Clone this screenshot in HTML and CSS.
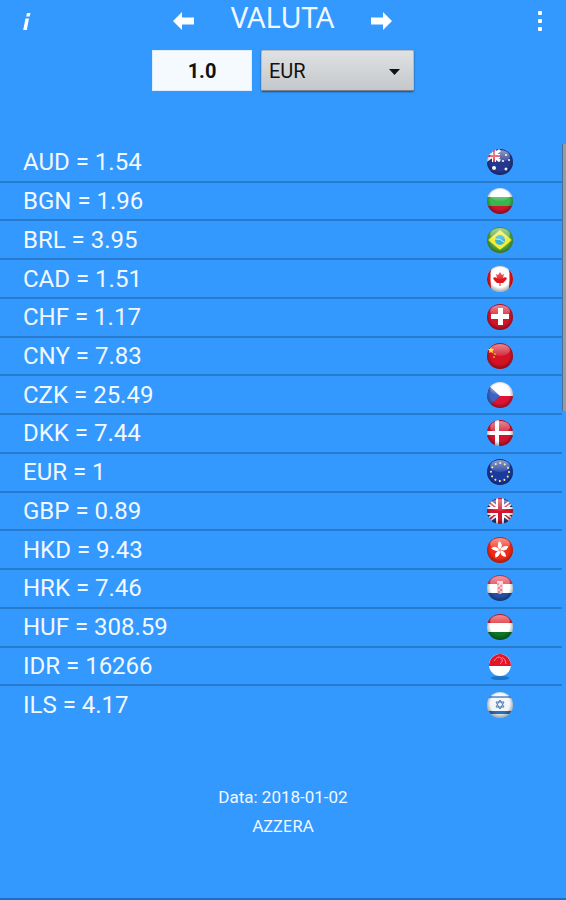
FILE: index.html
```html
<!DOCTYPE html>
<html lang="it">
<head>
    <meta charset="UTF-8">
    <meta name="viewport" content="width=device-width, initial-scale=1.0">
    <title>Valuta</title>
    <link rel="stylesheet" href="styles.css">
</head>
<body>

    <!-- Shared clip and gloss for the flags -->
    <svg class="defs" aria-hidden="true">
        <defs>
            <clipPath id="ball"><circle cx="14" cy="14" r="13"/></clipPath>
            <radialGradient id="shade" cx="50%" cy="45%" r="52%">
                <stop offset="70%" stop-color="#000" stop-opacity="0"/>
                <stop offset="100%" stop-color="#000" stop-opacity="0.3"/>
            </radialGradient>
            <linearGradient id="shine" x1="0" y1="0" x2="0" y2="1">
                <stop offset="0%" stop-color="#fff" stop-opacity="0.5"/>
                <stop offset="100%" stop-color="#fff" stop-opacity="0.1"/>
            </linearGradient>
            <g id="gloss">
                <circle cx="14" cy="14" r="13" fill="url(#shade)"/>
                <ellipse cx="14" cy="8" rx="10" ry="6" fill="url(#shine)"/>
            </g>
        </defs>
    </svg>

    <!-- Top Bar -->
    <header class="top-bar">
        <button class="icon-button info" type="button" aria-label="Info">
            <svg width="10" height="20" viewBox="0 0 10 20"><path d="M5 2h3.500l-.8 3.500H4.200zM3.500 7.500H7L4.800 19H1.200z"/></svg>
        </button>
        <div class="title-group">
            <button class="icon-button" type="button" aria-label="Indietro">
                <svg width="22" height="20" viewBox="0 0 22 20"><path d="M0 10L9 1v5.500h12v7H9V19z"/></svg>
            </button>
            <h1>VALUTA</h1>
            <button class="icon-button" type="button" aria-label="Avanti">
                <svg width="22" height="20" viewBox="0 0 22 20"><path d="M22 10L13 1v5.500H1v7h12V19z"/></svg>
            </button>
        </div>
        <button class="icon-button menu" type="button" aria-label="Menu">
            <svg width="6" height="20" viewBox="0 0 6 20"><rect x="1" y="0" width="4" height="4" rx="1"/><rect x="1" y="8" width="4" height="4" rx="1"/><rect x="1" y="16" width="4" height="4" rx="1"/></svg>
        </button>
    </header>

    <!-- Amount and base currency -->
    <form class="controls">
        <input class="amount" type="text" value="1.0" aria-label="Importo">
        <div class="select-box">
            <select aria-label="Valuta">
                <option>EUR</option>
                <option>USD</option>
                <option>GBP</option>
            </select>
            <svg class="caret" width="11" height="6" viewBox="0 0 11 6"><path d="M0 0h11L5.500 6z"/></svg>
        </div>
    </form>

    <!-- Rates -->
    <main class="rates">
        <ul>
            <li>
                <span>AUD = 1.54</span>
                <svg class="flag" viewBox="0 0 28 28"><g clip-path="url(#ball)"><path fill="#24388f" d="M0 0h28v28H0z"/><path fill="none" stroke="#fff" stroke-width="3" d="M0 2l14 11M14 2L0 13"/><path fill="none" stroke="#fff" stroke-width="4" d="M8 0v14M0 8h14"/><path fill="none" stroke="#e0354a" stroke-width="2" d="M8 0v14M0 8h14"/><circle cx="8" cy="20" r="2" fill="#fff"/><g fill="#fff"><circle cx="20" cy="7" r="1"/><circle cx="23" cy="12" r="1"/><circle cx="17" cy="13" r="1"/><circle cx="20" cy="21" r="1.500"/></g></g><use href="#gloss"/></svg>
            </li>
            <li>
                <span>BGN = 1.96</span>
                <svg class="flag" viewBox="0 0 28 28"><g clip-path="url(#ball)"><path fill="#fff" d="M0 0h28v10H0z"/><path fill="#38b54d" d="M0 10h28v9H0z"/><path fill="#cb1530" d="M0 19h28v9H0z"/></g><use href="#gloss"/></svg>
            </li>
            <li>
                <span>BRL = 3.95</span>
                <svg class="flag" viewBox="0 0 28 28"><g clip-path="url(#ball)"><path fill="#4fa83c" d="M0 0h28v28H0z"/><path fill="#f4ec3c" d="M14 4l12 10-12 10L2 14z"/><circle cx="14" cy="14" r="5" fill="#3bb4d6"/><path fill="none" stroke="#c9f2ee" d="M9 13q5-1 9 3"/></g><use href="#gloss"/></svg>
            </li>
            <li>
                <span>CAD = 1.51</span>
                <svg class="flag" viewBox="0 0 28 28"><g clip-path="url(#ball)"><path fill="#fff" d="M0 0h28v28H0z"/><path fill="#e3151c" d="M0 0h6q-3 14 0 28H0zM28 0h-6q3 14 0 28h6zM14 7l2 3 2-1-1 4 2-1 2 1-1 2-3 3h-2.500v3h-1v-3H11l-3-3-1-2 2-1 2 1-1-4 2 1z"/></g><use href="#gloss"/></svg>
            </li>
            <li>
                <span>CHF = 1.17</span>
                <svg class="flag" viewBox="0 0 28 28"><g clip-path="url(#ball)"><path fill="#d3142b" d="M0 0h28v28H0z"/></g><use href="#gloss"/><path fill="#fff" d="M12 5h5v6h6v5h-6v6h-5v-6H5v-5h7z"/></svg>
            </li>
            <li>
                <span>CNY = 7.83</span>
                <svg class="flag" viewBox="0 0 28 28"><g clip-path="url(#ball)"><path fill="#d31226" d="M0 0h28v28H0z"/></g><use href="#gloss"/><path fill="#ffe037" d="M5 5l1 2h2L6.500 9l.5 2-2-1-2 1 .5-2L2 7h2z"/><circle cx="9" cy="12" r="1" fill="#f59a28"/><circle cx="8" cy="15" r="1" fill="#f59a28"/></svg>
            </li>
            <li>
                <span>CZK = 25.49</span>
                <svg class="flag" viewBox="0 0 28 28"><g clip-path="url(#ball)"><path fill="#fff" d="M0 0h28v15H0z"/><path fill="#dc1536" d="M0 15h28v13H0z"/><path fill="#3d63c4" d="M0 2l14 13L0 27z"/></g><use href="#gloss"/></svg>
            </li>
            <li>
                <span>DKK = 7.44</span>
                <svg class="flag" viewBox="0 0 28 28"><g clip-path="url(#ball)"><path fill="#d3142e" d="M0 0h28v28H0z"/><path fill="#fff" d="M9 0h4v28H9zM0 12h28v4H0z"/></g><use href="#gloss"/></svg>
            </li>
            <li>
                <span>EUR = 1</span>
                <svg class="flag" viewBox="0 0 28 28"><g clip-path="url(#ball)"><path fill="#1b3aa0" d="M0 0h28v28H0z"/></g><use href="#gloss"/><circle cx="14" cy="14" r="9" fill="none" stroke="#f4ee9a" stroke-width="2" stroke-linecap="round" stroke-dasharray="0.100 4.612"/></svg>
            </li>
            <li>
                <span>GBP = 0.89</span>
                <svg class="flag" viewBox="0 0 28 28"><g clip-path="url(#ball)"><path fill="#233a88" d="M0 0h28v28H0z"/><path stroke="#fff" stroke-width="5" d="M0 3l28 22M28 3L0 25"/><path stroke="#d91b34" stroke-width="1.500" d="M0 3l28 22M28 3L0 25"/><path stroke="#fff" stroke-width="8" d="M14 0v28M0 14h28"/><path stroke="#d4142e" stroke-width="4" d="M14 0v28M0 14h28"/></g><use href="#gloss"/></svg>
            </li>
            <li>
                <span>HKD = 9.43</span>
                <svg class="flag" viewBox="0 0 28 28"><g clip-path="url(#ball)"><path fill="#f32a17" d="M0 0h28v28H0z"/></g><use href="#gloss"/><g fill="#fff"><path id="petal" d="M14 14q-4-4-1-9 5 3 1 9z"/><use href="#petal" transform="rotate(72 14 14)"/><use href="#petal" transform="rotate(144 14 14)"/><use href="#petal" transform="rotate(216 14 14)"/><use href="#petal" transform="rotate(288 14 14)"/></g><circle cx="14" cy="14" r="1.500" fill="#f99"/></svg>
            </li>
            <li>
                <span>HRK = 7.46</span>
                <svg class="flag" viewBox="0 0 28 28"><g clip-path="url(#ball)"><path fill="#e03547" d="M0 0h28v10H0z"/><path fill="#fff" d="M0 10h28v9H0z"/><path fill="#2450a8" d="M0 19h28v9H0z"/><path fill="#f6c6d0" d="M11 7h6v11q-3 4-6 0z"/><path fill="#ea7f90" d="M11 9h2v2h-2zM14 11h2v2h-2zM12 13h2v2h-2zM14 15h2v2h-2zM12 17h2v2h-2z"/></g><use href="#gloss"/></svg>
            </li>
            <li>
                <span>HUF = 308.59</span>
                <svg class="flag" viewBox="0 0 28 28"><g clip-path="url(#ball)"><path fill="#dd1a26" d="M0 0h28v10H0z"/><path fill="#fff" d="M0 10h28v9H0z"/><path fill="#0b7726" d="M0 19h28v9H0z"/></g><use href="#gloss"/></svg>
            </li>
            <li>
                <span>IDR = 16266</span>
                <svg class="flag" viewBox="0 0 28 28"><ellipse cx="14" cy="26" rx="9" ry="2" fill="#1f74c2"/><circle cx="14" cy="13" r="11" fill="#fff"/><path fill="#e2152a" d="M3 14a11 12 0 0 1 22 0z"/><path fill="none" stroke="#ff8c93" d="M8 9q4-6 7-3t-1 6M16 5q4 2 4 7"/></svg>
            </li>
            <li>
                <span>ILS = 4.17</span>
                <svg class="flag" viewBox="0 0 28 28"><g clip-path="url(#ball)"><path fill="#f1f6fa" d="M0 0h28v28H0z"/><path fill="#2b6fbd" d="M0 5h28v2H0zM0 20h28v3H0z"/></g><use href="#gloss"/><path fill="none" stroke="#4b79b5" d="M14 9l4 7h-8zM14 18l-4-7h8z"/></svg>
            </li>
        </ul>
        <div class="scroll-thumb"></div>
    </main>

    <!-- Footer -->
    <footer>
        <p>Data: 2018-01-02</p>
        <button class="reset" type="button">AZZERA</button>
    </footer>

</body>
</html>
```
FILE: styles.css
```css
/* Basic Reset */
* {
    margin: 0;
    padding: 0;
    box-sizing: border-box;
}

body {
    display: flex;
    flex-direction: column;
    min-height: 100vh;
    background-color: #3399ff;
    border-bottom: 2px solid #1c6fc4;
    color: #f2f8ff;
    font-family: Roboto, sans-serif;
}

button {
    background: none;
    border: none;
    color: inherit;
    cursor: pointer;
}

.defs {
    position: absolute;
    width: 0;
    height: 0;
}

/* Top Bar */
.top-bar {
    display: grid;
    grid-template-columns: 1fr auto 1fr;
    align-items: center;
    height: 42px;
    padding: 0 23px 0 22px;
}

.icon-button svg {
    display: block;
    fill: #fff;
}

.info {
    justify-self: start;
}

.menu {
    justify-self: end;
}

.title-group {
    display: flex;
    align-items: center;
    gap: 36px;
}

h1 {
    font-family: "Noto Sans", sans-serif;
    font-size: 29px;
    font-weight: 400;
    line-height: 34px;
    padding-bottom: 8px;
}

/* Amount and currency */
.controls {
    display: flex;
    justify-content: center;
    gap: 9px;
    padding-top: 8px;
}

.amount {
    width: 100px;
    height: 41px;
    border: 1px solid #dceeff;
    background-color: #f5faff;
    color: #111;
    font-family: inherit;
    font-size: 20px;
    font-weight: 700;
    text-align: center;
}

.select-box {
    position: relative;
    width: 153px;
}

select {
    appearance: none;
    width: 100%;
    height: 41px;
    padding: 0 7px;
    border: 1px solid #b4bcc4;
    border-radius: 2px;
    border-bottom-color: #77818c;
    background: linear-gradient(#dfe1e3, #c5c8cb);
    box-shadow: 0 1px 2px rgba(0, 0, 0, 0.5);
    color: #111;
    font-family: inherit;
    font-size: 20px;
}

.caret {
    position: absolute;
    top: 19px;
    right: 14px;
    fill: #111;
    pointer-events: none;
}

/* Rates list, the rows share the free height */
.rates {
    position: relative;
    display: flex;
    flex: 1;
    margin-top: 53px;
}

.rates ul {
    display: grid;
    grid-auto-rows: 1fr;
    flex: 1;
    margin-right: 4px;
    list-style: none;
}

.rates li {
    display: flex;
    justify-content: space-between;
    align-items: center;
    padding: 0 48px 0 23px;
    border-bottom: 2px solid #287acc;
    font-size: 24px;
    line-height: 28px;
}

.rates li:last-child {
    border-bottom-color: transparent;
}

.flag {
    width: 28px;
    height: 28px;
}

.scroll-thumb {
    position: absolute;
    top: 0;
    right: 0;
    width: 4px;
    height: 46%;
    border-left: 1px solid #4d6f94;
    background-color: #959ba3;
}

/* Footer */
footer {
    display: flex;
    flex-direction: column;
    align-items: center;
    gap: 5px;
    padding: 60px 0;
    font-size: 17px;
    line-height: 24px;
}

.reset {
    font-family: "Noto Sans", sans-serif;
    font-size: 17px;
    line-height: 24px;
}
```
